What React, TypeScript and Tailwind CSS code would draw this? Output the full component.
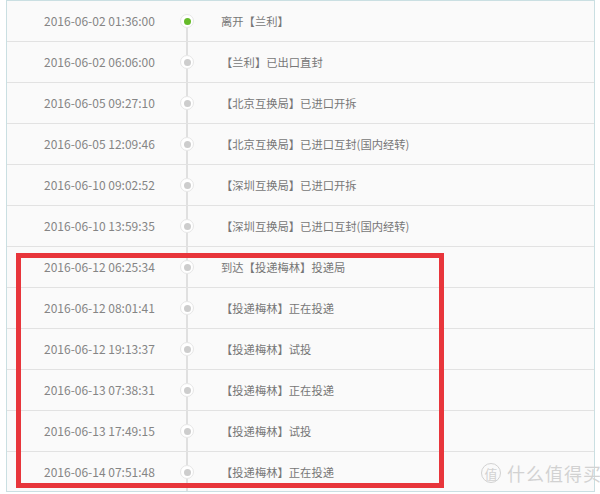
import React from 'react';

type Track = {
  time: string;
  text: string;
};

const tracks: Track[] = [
  { time: '2016-06-02 01:36:00', text: '离开【兰利】' },
  { time: '2016-06-02 06:06:00', text: '【兰利】已出口直封' },
  { time: '2016-06-05 09:27:10', text: '【北京互换局】已进口开拆' },
  { time: '2016-06-05 12:09:46', text: '【北京互换局】已进口互封(国内经转)' },
  { time: '2016-06-10 09:02:52', text: '【深圳互换局】已进口开拆' },
  { time: '2016-06-10 13:59:35', text: '【深圳互换局】已进口互封(国内经转)' },
  { time: '2016-06-12 06:25:34', text: '到达【投递梅林】投递局' },
  { time: '2016-06-12 08:01:41', text: '【投递梅林】正在投递' },
  { time: '2016-06-12 19:13:37', text: '【投递梅林】试投' },
  { time: '2016-06-13 07:38:31', text: '【投递梅林】正在投递' },
  { time: '2016-06-13 17:49:15', text: '【投递梅林】试投' },
  { time: '2016-06-14 07:51:48', text: '【投递梅林】正在投递' },
];

const font = { fontFamily: '"Noto Sans CJK SC", "Liberation Sans", sans-serif' };

// one row of the tracking table
const TrackRow: React.FC<{ item: Track; first: boolean }> = ({ item, first }) => {
  return (
    <div className="h-[41px] border-b border-[#e2e2e2] flex items-stretch">
      <div className="w-[165px] pl-[37px] flex items-center text-[12px] text-[#858585]">
        {item.time}
      </div>
      <div className="w-[30px] flex flex-col items-center">
        <div className={first ? 'flex-1 w-[2px]' : 'flex-1 w-[2px] bg-[#e0e0e0]'} />
        <div className="w-[14px] h-[14px] rounded-full bg-white border border-[#e6e6e6] flex items-center justify-center">
          <div className={first ? 'w-[7px] h-[7px] rounded-full bg-[#66bb2a]' : 'w-[7px] h-[7px] rounded-full bg-[#cdcdcd]'} />
        </div>
        <div className="flex-1 w-[2px] bg-[#e0e0e0]" />
      </div>
      <div className="pl-[19px] flex items-center text-[11.3px] text-[#777777]">{item.text}</div>
    </div>
  );
};

export default function App() {
  return (
    <div className="w-[600px] h-[494px] bg-white relative overflow-hidden" style={font}>
      <div className="ml-[6px] w-[589px] h-[492px] border-l border-r border-t border-b border-[#cadfe2] bg-[#fafafa] overflow-hidden">
        {tracks.map((t, i) => (
          <TrackRow key={i} item={t} first={i === 0} />
        ))}
      </div>

      {/* red highlight box */}
      <div className="absolute left-[16px] top-[253px] w-[428px] h-[235px] border-[5px] border-[#e8353b]" />

      {/* watermark, clipped at the right edge as in the picture */}
      <div className="absolute left-[481px] top-[463px] flex items-center gap-[6px] text-[#d2d2d2]">
        <span className="w-[20px] h-[20px] rounded-full border border-[#d2d2d2] flex items-center justify-center text-[13px] leading-none">
          值
        </span>
        <span className="text-[18px] leading-none tracking-[1px] whitespace-nowrap">什么值得买</span>
      </div>
    </div>
  );
}
